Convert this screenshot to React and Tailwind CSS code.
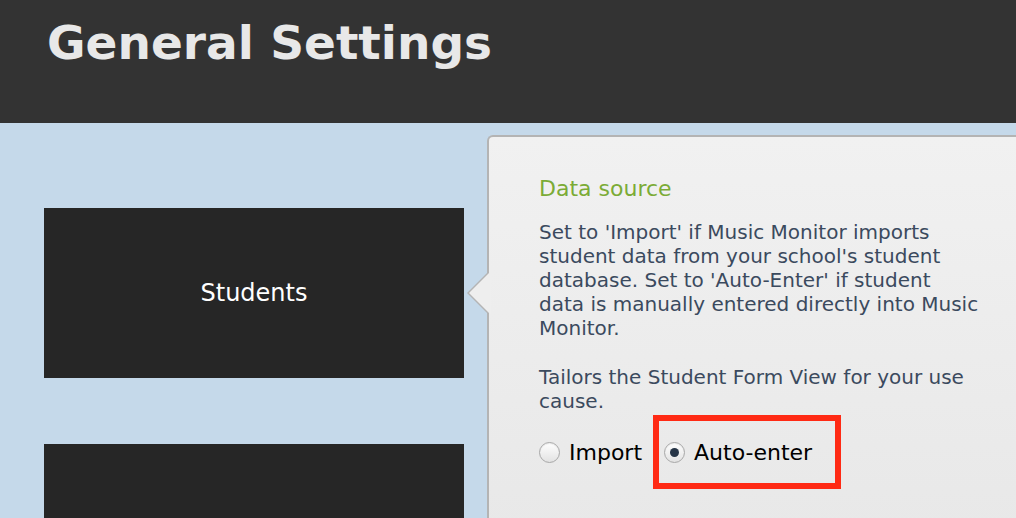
import React from 'react'

function NavTile({ label }) {
  return (
    <div className="h-[170px] w-[420px] bg-[#262626] flex items-center justify-center">
      <span className="text-[24px] text-white">{label}</span>
    </div>
  )
}

function Radio({ checked, label }) {
  return (
    <label className="flex items-center gap-[9px]">
      <span className="w-[21px] h-[21px] rounded-full border border-[#a8a8a8] bg-gradient-to-b from-white to-[#e2e2e2] flex items-center justify-center shadow-[inset_0_1px_1px_rgba(0,0,0,0.08)]">
        {checked && <span className="w-[9px] h-[9px] rounded-full bg-[#253446]"></span>}
      </span>
      <span className="text-[22px] text-black">{label}</span>
    </label>
  )
}

export default function App() {
  return (
    <div className="w-[1016px] h-[518px] overflow-hidden bg-[#c5d9ea] font-['DejaVu_Sans',Verdana,sans-serif]">
      {/* Header */}
      <header className="h-[123px] bg-[#333333] pl-[47px] pt-[13px]">
        <h1 className="text-[47px] font-bold text-[#e8e8e8] leading-[60px]">General Settings</h1>
      </header>

      <div className="flex pt-[12px]">
        {/* Left nav */}
        <div className="flex flex-col gap-[66px] pl-[44px] pt-[73px] w-[487px]">
          <NavTile label="Students" />
          <NavTile label="" />
        </div>

        {/* Settings panel */}
        <div className="relative flex-1 h-[400px] bg-gradient-to-b from-[#f1f1f1] to-[#e8e8e8] border-l-2 border-t-2 border-[#b4b4b4] rounded-tl-[6px] pl-[50px] pt-[38px]">
          {/* pointer toward the selected tile */}
          <div className="absolute left-[-22px] top-[134px] w-0 h-0 border-y-[22px] border-y-transparent border-r-[22px] border-r-[#b4b4b4]"></div>
          <div className="absolute left-[-20px] top-[134px] w-0 h-0 border-y-[22px] border-y-transparent border-r-[22px] border-r-[#eeeeee]"></div>

          <h2 className="text-[22px] text-[#7bab36] leading-[28px]">Data source</h2>
          <p className="mt-[17px] w-[442px] text-[20px] leading-[24px] text-[#3b4a5e]">
            Set to 'Import' if Music Monitor imports student data from your school's student database. Set to 'Auto-Enter' if student data is manually entered directly into Music Monitor.
          </p>
          <p className="mt-[25px] w-[442px] text-[20px] leading-[24px] text-[#3b4a5e]">
            Tailors the Student Form View for your use cause.
          </p>

          <div className="mt-[2px] flex items-center">
            <Radio label="Import" />
            <div className="ml-[11px] border-[6px] border-[#ff2a14] h-[74px] pl-[5px] pr-[23px] flex items-center">
              <Radio checked label="Auto-enter" />
            </div>
          </div>
        </div>
      </div>
    </div>
  )
}
